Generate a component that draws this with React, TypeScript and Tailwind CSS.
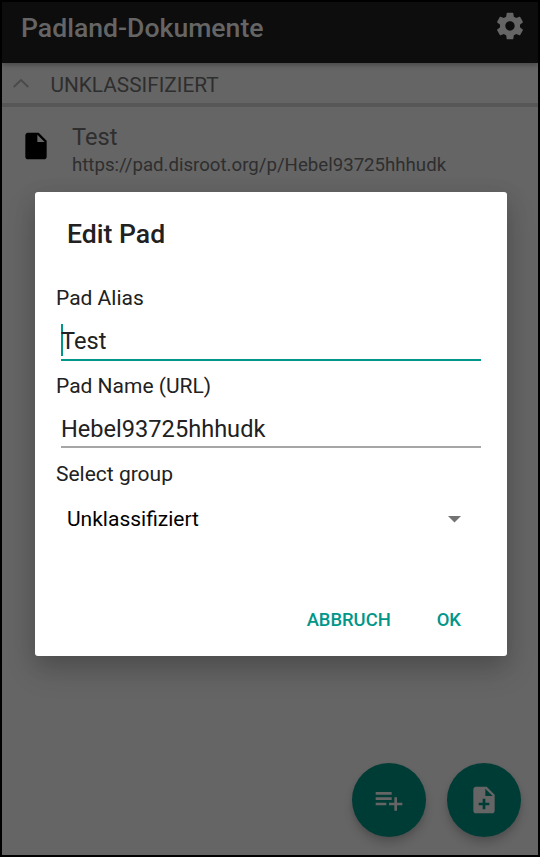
import type { ReactNode } from "react";

function Icon({ d, className }: { d: string; className: string }) {
  return (
    <svg viewBox="0 0 24 24" width="32" height="32" className={className} fill="currentColor">
      <path d={d} />
    </svg>
  );
}

const SETTINGS =
  "M19.43 12.98c.04-.32.07-.64.07-.98s-.03-.66-.07-.98l2.11-1.65c.19-.15.24-.42.12-.64l-2-3.46c-.12-.22-.39-.3-.61-.22l-2.49 1c-.52-.4-1.08-.73-1.69-.98l-.38-2.65C14.46 2.18 14.25 2 14 2h-4c-.25 0-.46.18-.49.42l-.38 2.65c-.61.25-1.17.59-1.69.98l-2.49-1c-.23-.09-.49 0-.61.22l-2 3.46c-.13.22-.07.49.12.64l2.11 1.65c-.04.32-.07.65-.07.98s.03.66.07.98l-2.11 1.65c-.19.15-.24.42-.12.64l2 3.46c.12.22.39.3.61.22l2.49-1c.52.4 1.08.73 1.69.98l.38 2.65c.03.24.24.42.49.42h4c.25 0 .46-.18.49-.42l.38-2.65c.61-.25 1.17-.59 1.69-.98l2.49 1c.23.09.49 0 .61-.22l2-3.46c.12-.22.07-.49-.12-.64l-2.11-1.65zM12 15.5c-1.93 0-3.5-1.57-3.5-3.5s1.57-3.5 3.5-3.5 3.5 1.57 3.5 3.5-1.57 3.5-3.5 3.5z";
const FILE =
  "M6 2c-1.1 0-1.99.9-1.99 2L4 20c0 1.1.89 2 1.99 2H18c1.1 0 2-.9 2-2V8l-6-6H6zm7 7V3.5L18.5 9H13z";
const NOTE_ADD =
  "M14 2H6c-1.1 0-1.99.9-1.99 2L4 20c0 1.1.89 2 1.99 2H18c1.1 0 2-.9 2-2V8l-6-6zm2 14h-3v3h-2v-3H8v-2h3v-3h2v3h3v2zm-3-7V3.5L18.5 9H13z";
const PLAYLIST_ADD =
  "M14 10H2v2h12v-2zm0-4H2v2h12V6zm4 8v-4h-2v4h-4v2h4v4h2v-4h4v-2h-4zM2 16h8v-2H2v2z";

function Fab({ label, children }: { label: string; children: ReactNode }) {
  return (
    <button
      aria-label={label}
      className="flex size-[74px] items-center justify-center rounded-full bg-[#003c36] text-[#656565] shadow-[0_7px_10px_rgba(0,0,0,0.16),0_2px_4px_rgba(0,0,0,0.08)]"
    >
      {children}
    </button>
  );
}

function EditDialog() {
  return (
    <section
      role="dialog"
      className="absolute left-[35px] top-[192px] flex h-[464px] w-[472px] flex-col rounded-[3px] bg-white text-[21px] text-[#212121] shadow-[0_14px_30px_rgba(0,0,0,0.18),0_6px_22px_rgba(0,0,0,0.1)]"
    >
      <h2 className="flex h-[84px] items-center pl-8 text-[26.6px] font-medium">Edit Pad</h2>
      <label className="flex h-11 items-center pl-[21px] pt-[2px]">Pad Alias</label>
      <div className="mx-[26px] flex h-[41px] items-center border-b-2 border-[#009688] pt-[5px] text-[23.6px]">
        <span className="-mr-[2px] mb-[5px] h-8 w-[2px] bg-[#009688]" />
        <span>Test</span>
      </div>
      <label className="flex h-[50px] items-center pl-[21px] pt-[2px]">Pad Name (URL)</label>
      <div className="mx-[26px] flex h-[37px] items-center border-b-2 border-[#a6a6a6] pt-[3px] text-[23.6px]">
        Hebel93725hhhudk
      </div>
      <label className="flex h-[52px] items-center pl-[21px] pt-[2px]">Select group</label>
      <div className="flex h-[38px] items-center justify-between pl-8 pr-[46px] text-black">
        <span className="pt-[2px]">Unklassifiziert</span>
        <svg width="13" height="7" viewBox="0 0 13 7" className="fill-[#737373]">
          <path d="M0 0h13L6.5 6.5z" />
        </svg>
      </div>
      <div className="mt-[62px] flex h-[38px] items-center justify-end gap-[46px] pr-[46px] pt-px text-[18.4px] font-medium text-[#009688]">
        <button>ABBRUCH</button>
        <button>OK</button>
      </div>
    </section>
  );
}

export default function App() {
  return (
    <div className="relative flex h-[857px] w-[540px] flex-col overflow-hidden border-2 border-black bg-[#656565] font-[Roboto,sans-serif]">
      <header className="z-10 flex h-[61px] shrink-0 items-start justify-between bg-[#0d0d0d] pl-[19px] pr-3 text-[#656565] shadow-[0_2px_5px_rgba(0,0,0,0.3)]">
        <h1 className="flex h-[51px] items-center text-[26.6px] font-medium">Padland-Dokumente</h1>
        <Icon d={SETTINGS} className="mt-2" />
      </header>
      <div className="flex h-[44px] shrink-0 items-center border-b-4 border-[#575757] pl-[11px] text-[21px] text-[#2e2e2e]">
        <svg width="16" height="9" viewBox="0 0 16 9" className="mr-[21.5px] fill-none stroke-[#4a4a4a] stroke-[1.8]">
          <path d="M.7 8 8 1l7.3 7" />
        </svg>
        <span className="pt-[6px] text-[20.8px]">UNKLASSIFIZIERT</span>
      </div>
      <div className="flex pl-[18px] pt-[14px] text-[#2e2e2e]">
        <Icon d={FILE} className="mt-[9px] text-black" />
        <div className="ml-5 flex flex-col">
          <span className="text-[23.6px] leading-8">Test</span>
          <span className="text-[18.65px] leading-6">https://pad.disroot.org/p/Hebel93725hhhudk</span>
        </div>
      </div>
      <div className="mb-[18px] mr-[17px] mt-auto flex justify-end gap-[21px]">
        <Fab label="Add group">
          <Icon d={PLAYLIST_ADD} className="" />
        </Fab>
        <Fab label="Add pad">
          <Icon d={NOTE_ADD} className="" />
        </Fab>
      </div>
      <div className="absolute -inset-[2px]">
        <EditDialog />
      </div>
    </div>
  );
}
